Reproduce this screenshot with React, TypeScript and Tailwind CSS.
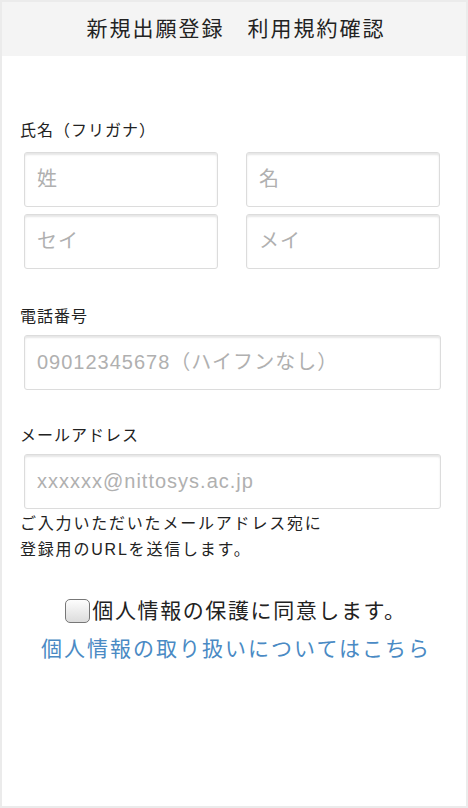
const fontStack = {
  fontFamily: '"Liberation Sans", "Noto Sans CJK JP", sans-serif',
}

type FieldProps = {
  placeholder: string
  className?: string
}

function Field({ placeholder, className = "" }: FieldProps) {
  return (
    <input
      type="text"
      placeholder={placeholder}
      className={`h-[55px] min-w-0 rounded-[3px] border border-[#dcdcdc] bg-white px-3 text-[20px] tracking-[1px] text-[#333] shadow-[inset_0_2px_2px_rgba(0,0,0,0.1)] outline-none placeholder:text-[#b0b0b0] ${className}`}
    />
  )
}

export default function App() {
  return (
    <div
      className="flex h-[808px] w-[468px] flex-col border-2 border-[#ebebeb] bg-white"
      style={fontStack}
    >
      <header className="flex h-[54px] items-center justify-center bg-[#f4f4f4] pl-[4px] text-[21px] tracking-[2px] text-[#222]">
        新規出願登録　利用規約確認
      </header>
      <main className="flex flex-col px-[18px] pt-[63px]">
        <label className="text-[16px] leading-6 tracking-[1px] text-[#222]">氏名（フリガナ）</label>
        <div className="mt-[9px] grid grid-cols-2 gap-x-[28px] gap-y-[7px] pl-1 pr-[8px]">
          <Field placeholder="姓" />
          <Field placeholder="名" />
          <Field placeholder="セイ" />
          <Field placeholder="メイ" />
        </div>

        <label className="mt-[36px] text-[16px] leading-6 tracking-[1px] text-[#222]">電話番号</label>
        <div className="mt-[6px] flex pl-1 pr-[7px]">
          <Field placeholder="09012345678（ハイフンなし）" className="w-full" />
        </div>

        <label className="mt-[34px] text-[16px] leading-6 tracking-[1px] text-[#222]">メールアドレス</label>
        <div className="mt-[6px] flex pl-1 pr-[7px]">
          <Field placeholder="xxxxxx@nittosys.ac.jp" className="w-full" />
        </div>
        <p className="mt-[2px] text-[16px] leading-[26px] tracking-[1.8px] text-[#222]">
          ご入力いただいたメールアドレス宛に
          <br />
          登録用のURLを送信します。
        </p>

        <div className="mt-[34px] flex flex-col items-center pl-[4px]">
          <label className="flex items-center text-[21px] leading-7 tracking-[1.6px] text-[#222]">
            <span className="mr-[2px] inline-block h-[24px] w-[25px] rounded-[5px] border border-[#777] bg-gradient-to-b from-[#fdfdfd] to-[#dcdcdc]" />
            個人情報の保護に同意します。
          </label>
          <a href="#" className="mt-[10px] text-[21px] leading-7 tracking-[2px] text-[#4a8ac4]">
            個人情報の取り扱いについてはこちら
          </a>
        </div>
      </main>
    </div>
  )
}
